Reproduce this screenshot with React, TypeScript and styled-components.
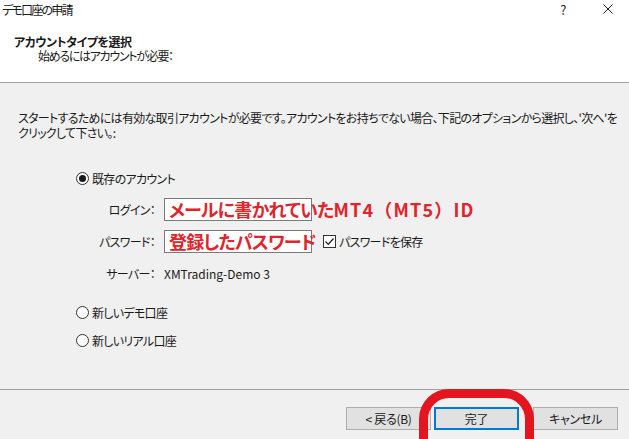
import React from "react";
import styled, { createGlobalStyle } from "styled-components";

const GlobalStyle = createGlobalStyle`
  html, body { margin: 0; padding: 0; background: #f0f0f0; }
  body { font-family: "Noto Sans CJK JP", "Noto Sans", sans-serif; }
  * { box-sizing: border-box; }
`;

const Window = styled.div`
  width: 629px;
  height: 439px;
  display: flex;
  flex-direction: column;
  background: #f0f0f0;
  color: #1a1a1a;
  font-size: 12px;
  letter-spacing: -0.7px;
  font-feature-settings: "palt" 1;
  overflow: hidden;
  position: relative;
`;

const Header = styled.div`
  height: 83px;
  background: #ffffff;
  border-bottom: 1px solid #a0a0a0;
  display: flex;
  flex-direction: column;
  flex-shrink: 0;
`;

const TitleBar = styled.div`
  height: 22px;
  display: flex;
  align-items: center;
  padding-left: 2px;
`;

const Title = styled.span`
  flex: 1;
  font-size: 12px;
  line-height: 22px;
  margin-top: -2px;
  letter-spacing: -1.8px;
`;

const TitleButton = styled.span<{ $w: number }>`
  width: ${(p) => p.$w}px;
  height: 22px;
  display: flex;
  align-items: center;
  justify-content: center;
  font-size: 13px;
  margin-top: -4px;
`;

const Heading = styled.div`
  padding: 13px 0 0 14px;
  display: flex;
  flex-direction: column;
`;

const HeadingTitle = styled.div`
  font-weight: bold;
  font-size: 12px;
  line-height: 14px;
  letter-spacing: -0.5px;
`;

const HeadingSub = styled.div`
  font-size: 12px;
  line-height: 14px;
  padding-left: 24px;
  letter-spacing: -1.3px;
`;

const Body = styled.div`
  flex: 1;
  padding: 27px 0 0 18px;
  display: flex;
  flex-direction: column;
`;

const Description = styled.div`
  font-size: 12px;
  line-height: 15px;
  white-space: nowrap;
`;

const Options = styled.div`
  margin: 30px 0 0 58px;
  display: flex;
  flex-direction: column;
`;

const RadioRow = styled.label<{ $gap: number }>`
  display: flex;
  align-items: center;
  height: 16px;
  gap: 3px;
  margin-top: ${(p) => p.$gap}px;
`;

const RadioCircle = styled.span<{ $checked?: boolean }>`
  width: 13px;
  height: 13px;
  border-radius: 50%;
  border: 1px solid #333;
  background: #fff;
  display: flex;
  align-items: center;
  justify-content: center;
  &::after {
    content: "";
    width: 7px;
    height: 7px;
    border-radius: 50%;
    background: #1a1a1a;
    display: ${(p) => (p.$checked ? "block" : "none")};
  }
`;

const FormGrid = styled.div`
  margin-top: 12px;
  display: grid;
  grid-template-columns: 79px 148px auto;
  grid-auto-rows: 23px;
  column-gap: 9px;
  row-gap: 9px;
  align-items: center;
`;

const FieldLabel = styled.span`
  text-align: right;
  white-space: nowrap;
`;

const FieldBox = styled.div`
  height: 23px;
  border: 1px solid #7a7a7a;
  background: #fff;
  overflow: visible;
  display: flex;
  align-items: center;
  padding-left: 4px;
`;

const Annotation = styled.span`
  color: #e0242c;
  font-weight: bold;
  font-size: 18px;
  letter-spacing: -0.8px;
  white-space: nowrap;
  line-height: 21px;
`;

const AnnotationLatin = styled.span`
  font-feature-settings: normal;
  letter-spacing: 1.2px;
`;

const ServerValue = styled.span`
  white-space: nowrap;
  letter-spacing: 0;
`;

const CheckRow = styled.label`
  display: flex;
  align-items: center;
  gap: 3px;
  margin-left: 2px;
  white-space: nowrap;
`;

const CheckBox = styled.span`
  width: 13px;
  height: 13px;
  border: 1px solid #333;
  background: #fff;
  display: flex;
  align-items: center;
  justify-content: center;
`;

const Footer = styled.div`
  height: 50px;
  border-top: 1px solid #a0a0a0;
  display: flex;
  justify-content: flex-end;
  align-items: flex-start;
  padding: 17px 11px 0 0;
  flex-shrink: 0;
`;

const Button = styled.button<{ $primary?: boolean; $ml?: number }>`
  width: 85px;
  height: 23px;
  margin-left: ${(p) => p.$ml ?? 0}px;
  background: #e1e1e1;
  border: ${(p) => (p.$primary ? "2px solid #0078d7" : "1px solid #adadad")};
  font-family: "Noto Sans CJK JP", sans-serif;
  font-feature-settings: "palt" 1;
  font-size: 12px;
  letter-spacing: -0.3px;
  color: #1a1a1a;
  padding: 0;
  display: flex;
  align-items: center;
  justify-content: center;
`;

const Highlight = styled.div`
  position: relative;
  margin-left: 3px;
`;

const Oval = styled.div`
  position: absolute;
  left: -15px;
  top: -18px;
  width: 115px;
  height: 84px;
  border: 9px solid #e3151f;
  border-radius: 30px;
  pointer-events: none;
`;

export default function App() {
  return (
    <>
      <GlobalStyle />
      <Window>
        <Header>
          <TitleBar>
            <Title>デモ口座の申請</Title>
            <TitleButton $w={48}>?</TitleButton>
            <TitleButton $w={42}>
              <svg width="10" height="10" viewBox="0 0 10 10">
                <path d="M0.5 0.5 L9.5 9.5 M9.5 0.5 L0.5 9.5" stroke="#1a1a1a" strokeWidth="1" />
              </svg>
            </TitleButton>
          </TitleBar>
          <Heading>
            <HeadingTitle>アカウントタイプを選択</HeadingTitle>
            <HeadingSub>始めるにはアカウントが必要：</HeadingSub>
          </Heading>
        </Header>
        <Body>
          <Description>
            スタートするためには有効な取引アカウントが必要です。アカウントをお持ちでない場合、下記のオプションから選択し、'次へ'を
            <br />
            クリックして下さい。:
          </Description>
          <Options>
            <RadioRow $gap={0}>
              <RadioCircle $checked />
              既存のアカウント
            </RadioRow>
            <FormGrid>
              <FieldLabel>ログイン：</FieldLabel>
              <FieldBox>
                <Annotation>
                  メールに書かれていた<AnnotationLatin>MT4（MT5）ID</AnnotationLatin>
                </Annotation>
              </FieldBox>
              <span />
              <FieldLabel>パスワード：</FieldLabel>
              <FieldBox>
                <Annotation>登録したパスワード</Annotation>
              </FieldBox>
              <CheckRow>
                <CheckBox>
                  <svg width="11" height="11" viewBox="0 0 11 11">
                    <path d="M1.5 5.5 L4.3 8.3 L9.5 2.5" fill="none" stroke="#1a1a1a" strokeWidth="1.2" />
                  </svg>
                </CheckBox>
                パスワードを保存
              </CheckRow>
              <FieldLabel>サーバー：</FieldLabel>
              <ServerValue>XMTrading-Demo 3</ServerValue>
              <span />
            </FormGrid>
            <RadioRow $gap={19}>
              <RadioCircle />
              新しいデモ口座
            </RadioRow>
            <RadioRow $gap={12}>
              <RadioCircle />
              新しいリアル口座
            </RadioRow>
          </Options>
        </Body>
        <Footer>
          <Button>&lt; 戻る(B)</Button>
          <Highlight>
            <Button $primary>完了</Button>
            <Oval />
          </Highlight>
          <Button $ml={14}>キャンセル</Button>
        </Footer>
      </Window>
    </>
  );
}
